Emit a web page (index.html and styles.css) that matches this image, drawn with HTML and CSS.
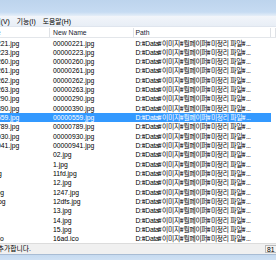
FILE: index.html
```html
<!DOCTYPE html>
<html lang="ko">
<head>
<meta charset="utf-8">
<link rel="stylesheet" href="styles.css">
</head>
<body>
<div class="window">
  <div class="titlebar"></div>
  <div class="menubar">
    <span class="menu">파일(F)</span>
    <span class="menu">편집(E)</span>
    <span class="menu">보기(V)</span>
    <span class="menu">기능(I)</span>
    <span class="menu">도움말(H)</span>
  </div>
  <div class="list">
    <div class="row header">
      <div class="cell c1">Old Name</div>
      <div class="cell c2">New Name</div>
      <div class="cell c3">Path</div>
      <div class="cell c4"></div>
    </div>
    <div class="row"><div class="cell c1">00000221.jpg</div><div class="cell c2">00000221.jpg</div><div class="cell c3">D:<span class="won">₩</span>Data<span class="won">₩</span>이미지<span class="won">₩</span>월페이퍼<span class="won">₩</span>미정리 파일<span class="won">₩</span>...</div><div class="cell c4"></div></div>
    <div class="row"><div class="cell c1">00000223.jpg</div><div class="cell c2">00000223.jpg</div><div class="cell c3">D:<span class="won">₩</span>Data<span class="won">₩</span>이미지<span class="won">₩</span>월페이퍼<span class="won">₩</span>미정리 파일<span class="won">₩</span>...</div><div class="cell c4"></div></div>
    <div class="row"><div class="cell c1">00000260.jpg</div><div class="cell c2">00000260.jpg</div><div class="cell c3">D:<span class="won">₩</span>Data<span class="won">₩</span>이미지<span class="won">₩</span>월페이퍼<span class="won">₩</span>미정리 파일<span class="won">₩</span>...</div><div class="cell c4"></div></div>
    <div class="row"><div class="cell c1">00000261.jpg</div><div class="cell c2">00000261.jpg</div><div class="cell c3">D:<span class="won">₩</span>Data<span class="won">₩</span>이미지<span class="won">₩</span>월페이퍼<span class="won">₩</span>미정리 파일<span class="won">₩</span>...</div><div class="cell c4"></div></div>
    <div class="row"><div class="cell c1">00000262.jpg</div><div class="cell c2">00000262.jpg</div><div class="cell c3">D:<span class="won">₩</span>Data<span class="won">₩</span>이미지<span class="won">₩</span>월페이퍼<span class="won">₩</span>미정리 파일<span class="won">₩</span>...</div><div class="cell c4"></div></div>
    <div class="row"><div class="cell c1">00000263.jpg</div><div class="cell c2">00000263.jpg</div><div class="cell c3">D:<span class="won">₩</span>Data<span class="won">₩</span>이미지<span class="won">₩</span>월페이퍼<span class="won">₩</span>미정리 파일<span class="won">₩</span>...</div><div class="cell c4"></div></div>
    <div class="row"><div class="cell c1">00000290.jpg</div><div class="cell c2">00000290.jpg</div><div class="cell c3">D:<span class="won">₩</span>Data<span class="won">₩</span>이미지<span class="won">₩</span>월페이퍼<span class="won">₩</span>미정리 파일<span class="won">₩</span>...</div><div class="cell c4"></div></div>
    <div class="row"><div class="cell c1">00000390.jpg</div><div class="cell c2">00000390.jpg</div><div class="cell c3">D:<span class="won">₩</span>Data<span class="won">₩</span>이미지<span class="won">₩</span>월페이퍼<span class="won">₩</span>미정리 파일<span class="won">₩</span>...</div><div class="cell c4"></div></div>
    <div class="row selected"><div class="cell c1">00000559.jpg</div><div class="cell c2">00000559.jpg</div><div class="cell c3">D:<span class="won">₩</span>Data<span class="won">₩</span>이미지<span class="won">₩</span>월페이퍼<span class="won">₩</span>미정리 파일<span class="won">₩</span>...</div><div class="cell c4"></div></div>
    <div class="row"><div class="cell c1">00000789.jpg</div><div class="cell c2">00000789.jpg</div><div class="cell c3">D:<span class="won">₩</span>Data<span class="won">₩</span>이미지<span class="won">₩</span>월페이퍼<span class="won">₩</span>미정리 파일<span class="won">₩</span>...</div><div class="cell c4"></div></div>
    <div class="row"><div class="cell c1">00000930.jpg</div><div class="cell c2">00000930.jpg</div><div class="cell c3">D:<span class="won">₩</span>Data<span class="won">₩</span>이미지<span class="won">₩</span>월페이퍼<span class="won">₩</span>미정리 파일<span class="won">₩</span>...</div><div class="cell c4"></div></div>
    <div class="row"><div class="cell c1">00000941.jpg</div><div class="cell c2">00000941.jpg</div><div class="cell c3">D:<span class="won">₩</span>Data<span class="won">₩</span>이미지<span class="won">₩</span>월페이퍼<span class="won">₩</span>미정리 파일<span class="won">₩</span>...</div><div class="cell c4"></div></div>
    <div class="row"><div class="cell c1">02.jpg</div><div class="cell c2">02.jpg</div><div class="cell c3">D:<span class="won">₩</span>Data<span class="won">₩</span>이미지<span class="won">₩</span>월페이퍼<span class="won">₩</span>미정리 파일<span class="won">₩</span>...</div><div class="cell c4"></div></div>
    <div class="row"><div class="cell c1">1.jpg</div><div class="cell c2">1.jpg</div><div class="cell c3">D:<span class="won">₩</span>Data<span class="won">₩</span>이미지<span class="won">₩</span>월페이퍼<span class="won">₩</span>미정리 파일<span class="won">₩</span>...</div><div class="cell c4"></div></div>
    <div class="row"><div class="cell c1">11fd.jpg</div><div class="cell c2">11fd.jpg</div><div class="cell c3">D:<span class="won">₩</span>Data<span class="won">₩</span>이미지<span class="won">₩</span>월페이퍼<span class="won">₩</span>미정리 파일<span class="won">₩</span>...</div><div class="cell c4"></div></div>
    <div class="row"><div class="cell c1">12.jpg</div><div class="cell c2">12.jpg</div><div class="cell c3">D:<span class="won">₩</span>Data<span class="won">₩</span>이미지<span class="won">₩</span>월페이퍼<span class="won">₩</span>미정리 파일<span class="won">₩</span>...</div><div class="cell c4"></div></div>
    <div class="row"><div class="cell c1">1247.jpg</div><div class="cell c2">1247.jpg</div><div class="cell c3">D:<span class="won">₩</span>Data<span class="won">₩</span>이미지<span class="won">₩</span>월페이퍼<span class="won">₩</span>미정리 파일<span class="won">₩</span>...</div><div class="cell c4"></div></div>
    <div class="row"><div class="cell c1">12dfs.jpg</div><div class="cell c2">12dfs.jpg</div><div class="cell c3">D:<span class="won">₩</span>Data<span class="won">₩</span>이미지<span class="won">₩</span>월페이퍼<span class="won">₩</span>미정리 파일<span class="won">₩</span>...</div><div class="cell c4"></div></div>
    <div class="row"><div class="cell c1">13.jpg</div><div class="cell c2">13.jpg</div><div class="cell c3">D:<span class="won">₩</span>Data<span class="won">₩</span>이미지<span class="won">₩</span>월페이퍼<span class="won">₩</span>미정리 파일<span class="won">₩</span>...</div><div class="cell c4"></div></div>
    <div class="row"><div class="cell c1">14.jpg</div><div class="cell c2">14.jpg</div><div class="cell c3">D:<span class="won">₩</span>Data<span class="won">₩</span>이미지<span class="won">₩</span>월페이퍼<span class="won">₩</span>미정리 파일<span class="won">₩</span>...</div><div class="cell c4"></div></div>
    <div class="row"><div class="cell c1">15.jpg</div><div class="cell c2">15.jpg</div><div class="cell c3">D:<span class="won">₩</span>Data<span class="won">₩</span>이미지<span class="won">₩</span>월페이퍼<span class="won">₩</span>미정리 파일<span class="won">₩</span>...</div><div class="cell c4"></div></div>
    <div class="row"><div class="cell c1">16ad.ico</div><div class="cell c2">16ad.ico</div><div class="cell c3">D:<span class="won">₩</span>Data<span class="won">₩</span>이미지<span class="won">₩</span>월페이퍼<span class="won">₩</span>미정리 파일<span class="won">₩</span>...</div><div class="cell c4"></div></div>
  </div>
  <div class="statusbar">
    <span class="msg">파일을 추가합니다.</span>
    <span class="count">81</span>
  </div>
  <div class="frame-bottom"></div>
</div>
</body>
</html>
```

FILE: styles.css
```css
* { box-sizing: border-box; }
html, body { margin: 0; padding: 0; background: #ffffff; }
body {
  width: 276px;
  height: 260px;
  overflow: hidden;
  font-family: "Liberation Sans", "Noto Sans CJK KR", sans-serif;
  font-size: 6.8px;
  color: #000;
}
.window {
  margin-left: -30px;
  width: 306px;
  height: 260px;
  display: flex;
  flex-direction: column;
  background: #fff;
}
.titlebar {
  height: 16px;
  flex: none;
  background: linear-gradient(to bottom, #bdd4ed 0%, #c6dbf2 75%, #d9e7f6 90%, #e6eef8 100%);
}
.menubar {
  height: 11px;
  flex: none;
  display: flex;
  align-items: center;
  padding-left: 0;
  margin-left: -42px;
  background: linear-gradient(to bottom, #f2f5fa, #e8eef6);
  border-bottom: 1px solid #dfe5ee;
  white-space: nowrap;
}
.menu { padding: 0 3.5px; line-height: 11px; }
.list {
  flex: 1;
  display: flex;
  flex-direction: column;
  padding-top: 1px;
  overflow: hidden;
}
.row {
  display: grid;
  grid-template-columns: 79.5px 84px 137px 1fr;
  height: 9.33px;
  line-height: 9.33px;
  white-space: nowrap;
  flex: none;
}
.cell { overflow: hidden; }
.c1 { padding-left: 8px; }
.c2 { padding-left: 3.5px; }
.c3 {
  padding-left: 2px;
  letter-spacing: -0.3px;
}
.header .c3 { letter-spacing: 0; }
.won {
  display: inline-block;
  width: 3.6px;
  font-family: "Liberation Sans", sans-serif;
  letter-spacing: 0;
  transform: scaleX(0.5);
  transform-origin: 0 50%;
}
.header {
  height: 10px;
  line-height: 9px;
  border-bottom: 1px solid #e3e6ea;
  color: #1c2430;
  margin-bottom: 0.5px;
}
.header .cell { border-right: 1px solid #dfe2e6; }
.header .c1 { padding-left: 0; }
.selected .c1, .selected .c2, .selected .c3 {
  background: #3399ff;
  color: #fff;
}
.statusbar {
  height: 11px;
  flex: none;
  display: flex;
  align-items: center;
  justify-content: space-between;
  background: #f0f0f0;
  border-top: 1px solid #dcdcdc;
  padding-left: 7px;
  padding-right: 0;
}
.msg { line-height: 10px; }
.count {
  width: 11px;
  height: 8px;
  line-height: 8px;
  border: 1px solid #b9b9b9;
  border-right: none;
  padding-left: 1px;
  background: #f4f4f4;
}
.frame-bottom {
  height: 6px;
  flex: none;
  background: linear-gradient(to bottom, #a8bcd4 0px, #a8bcd4 1px, #c6daf0 1px, #cfe1f4 100%);
}
```
